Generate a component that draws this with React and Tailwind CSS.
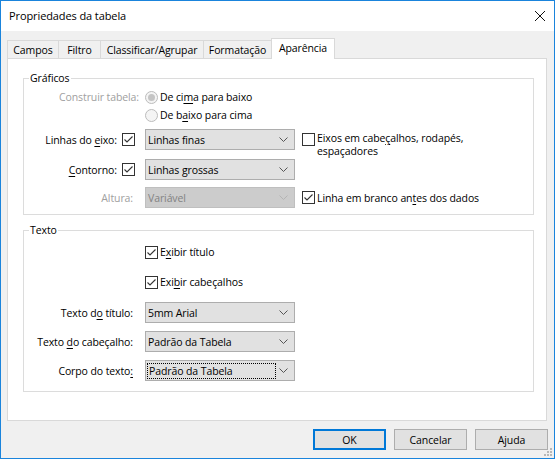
const U = ({ children }) => <span className="underline decoration-1 underline-offset-[2px]">{children}</span>

function Checkbox({ checked }) {
  return (
    <span className="flex h-[13px] w-[13px] shrink-0 items-center justify-center border border-[#333333] bg-white">
      {checked && (
        <svg width="11" height="11" viewBox="0 0 11 11">
          <path d="M1.5 5.5 L4 8 L9.5 2.5" fill="none" stroke="#333333" strokeWidth="1.1" />
        </svg>
      )}
    </span>
  )
}

function Radio({ checked }) {
  return (
    <span className="flex h-[13px] w-[13px] shrink-0 items-center justify-center rounded-full border border-[#bcbcbc] bg-[#f4f4f4]">
      {checked && <span className="h-[7px] w-[7px] rounded-full bg-[#c4c4c4]" />}
    </span>
  )
}

function Chevron({ color }) {
  return (
    <svg width="9" height="5" viewBox="0 0 9 5" className="mr-[6px] shrink-0">
      <polyline points="0.5,0.5 4.5,4.5 8.5,0.5" fill="none" stroke={color} strokeWidth="1" />
    </svg>
  )
}

function Combo({ value, disabled, focus }) {
  return (
    <div
      className={`flex h-[21px] w-[150px] shrink-0 items-center border ${
        disabled ? 'border-[#bfbfbf] bg-[#cccccc] text-[#838383]' : 'border-[#adadad] bg-[#e1e1e1] text-black'
      }`}
    >
      {focus ? (
        <span className="ml-[1px] flex h-[16px] w-[129px] shrink-0 items-center whitespace-nowrap border border-dotted border-black pl-[1px]">
          {value}
        </span>
      ) : (
        <span className="whitespace-nowrap pl-[2px]">{value}</span>
      )}
      <span className="flex-1" />
      <Chevron color={disabled ? '#b4b4b4' : '#555555'} />
    </div>
  )
}

function Group({ title, children, className }) {
  return (
    <div className={`relative border border-[#dcdcdc] ${className}`}>
      <span className="absolute -top-[9px] left-[5px] bg-white px-[1px] leading-[16px]">{title}</span>
      {children}
    </div>
  )
}

function Button({ children, primary }) {
  return (
    <div
      className={`flex h-[21px] w-[73px] items-center justify-center bg-[#e1e1e1] ${
        primary ? 'border-2 border-[#0078d7]' : 'border border-[#adadad]'
      }`}
    >
      {children}
    </div>
  )
}

const tabs = [
  { label: 'Campos', w: 'w-[51px]' },
  { label: 'Filtro', w: 'w-[42px]' },
  { label: 'Classificar/Agrupar', w: 'w-[103px]' },
  { label: 'Formatação', w: 'w-[68px]' },
]

export default function App() {
  return (
    <div className="relative flex h-[459px] w-[555px] flex-col border border-[#1a84dc] bg-[#f0f0f0] font-['Open_Sans',sans-serif] text-[10.5px] leading-[16px] tracking-[-0.1px] text-black">
      {/* title bar */}
      <div className="flex h-[30px] shrink-0 items-center justify-between bg-white pl-[8px] pr-[9px]">
        <span className="text-[11px]">Propriedades da tabela</span>
        <svg width="10" height="10" viewBox="0 0 10 10">
          <path d="M0 0 L10 10 M10 0 L0 10" stroke="#111111" strokeWidth="1" />
        </svg>
      </div>

      {/* tabs */}
      <div className="ml-[6px] mt-[7px] flex h-[20px] items-end">
        {tabs.map((t) => (
          <div
            key={t.label}
            className={`flex h-[18px] ${t.w} items-center justify-center border-l border-t border-[#d9d9d9] bg-[#f0f0f0]`}
          >
            {t.label}
          </div>
        ))}
        <div className="relative z-10 -mb-px flex h-[21px] w-[64px] items-center justify-center border-x border-t border-[#d9d9d9] bg-white pb-[2px]">
          Aparência
        </div>
      </div>

      {/* panel */}
      <div className="ml-[6px] flex h-[363px] w-[540px] flex-col border border-[#d9d9d9] bg-white pl-[15px]">
        <Group title="Gráficos" className="mt-[19px] h-[137px] w-[511px] pt-[9px]">
          <div className="flex h-[18px] items-center">
            <span className="w-[115px] text-right text-[#a0a0a0]">Construir tabela:</span>
            <span className="ml-[6px]"><Radio checked /></span>
            <span className="ml-[2px]">De ci<U>m</U>a para baixo</span>
          </div>
          <div className="flex h-[18px] items-center">
            <span className="w-[115px]" />
            <span className="ml-[6px]"><Radio /></span>
            <span className="ml-[2px]">De b<U>a</U>ixo para cima</span>
          </div>
          <div className="mt-[5px] flex h-[21px] items-center">
            <span className="w-[93px] text-right">Linhas do <U>e</U>ixo:</span>
            <span className="ml-[5px]"><Checkbox checked /></span>
            <span className="ml-[10px]"><Combo value="Linhas finas" /></span>
            <div className="ml-[7px] mt-[4px] flex items-start self-start">
              <Checkbox />
              <span className="ml-[2px] -mt-[1px] leading-[13px]">
                Eixos em cabe<U>ç</U>alhos, rodapés,
                <br />
                espaçadores
              </span>
            </div>
          </div>
          <div className="mt-[9px] flex h-[21px] items-center">
            <span className="w-[93px] text-right"><U>C</U>ontorno:</span>
            <span className="ml-[5px]"><Checkbox checked /></span>
            <span className="ml-[10px]"><Combo value="Linhas grossas" /></span>
          </div>
          <div className="mt-[7px] flex h-[21px] items-center">
            <span className="w-[109px] text-right text-[#a0a0a0]">Altura:</span>
            <span className="ml-[12px]"><Combo value="Variável" disabled /></span>
            <span className="ml-[7px]"><Checkbox checked /></span>
            <span className="ml-[2px]">Linha em branco an<U>t</U>es dos dados</span>
          </div>
        </Group>

        <Group title="Texto" className="mt-[15px] h-[162px] w-[511px] pt-[12px]">
          <div className="flex h-[18px] items-center">
            <span className="w-[121px]" />
            <Checkbox checked />
            <span className="ml-[2px]">E<U>x</U>ibir título</span>
          </div>
          <div className="mt-[12px] flex h-[18px] items-center">
            <span className="w-[121px]" />
            <Checkbox checked />
            <span className="ml-[2px]">Exi<U>b</U>ir cabeçalhos</span>
          </div>
          <div className="mt-[11px] flex h-[21px] items-center">
            <span className="w-[109px] text-right">Texto d<U>o</U> título:</span>
            <span className="ml-[12px]"><Combo value="5mm Arial" /></span>
          </div>
          <div className="mt-[8px] flex h-[21px] items-center">
            <span className="w-[109px] text-right">Texto <U>d</U>o cabeçalho:</span>
            <span className="ml-[12px]"><Combo value="Padrão da Tabela" /></span>
          </div>
          <div className="mt-[8px] flex h-[21px] items-center">
            <span className="w-[109px] text-right">Corpo do texto<U>:</U></span>
            <span className="ml-[12px]"><Combo value="Padrão da Tabela" focus /></span>
          </div>
        </Group>
      </div>

      {/* buttons */}
      <div className="mt-[8px] flex justify-end gap-[8px] pr-[6px]">
        <Button primary>OK</Button>
        <Button>Cancelar</Button>
        <Button>Ajuda</Button>
      </div>

      {/* size grip */}
      <svg width="8" height="8" viewBox="0 0 8 8" className="absolute bottom-[2px] right-[2px]">
        <rect x="6" y="0" width="2" height="2" fill="#b8b8b8" />
        <rect x="3" y="3" width="2" height="2" fill="#b8b8b8" />
        <rect x="6" y="3" width="2" height="2" fill="#b8b8b8" />
        <rect x="0" y="6" width="2" height="2" fill="#b8b8b8" />
        <rect x="3" y="6" width="2" height="2" fill="#b8b8b8" />
        <rect x="6" y="6" width="2" height="2" fill="#b8b8b8" />
      </svg>
    </div>
  )
}
